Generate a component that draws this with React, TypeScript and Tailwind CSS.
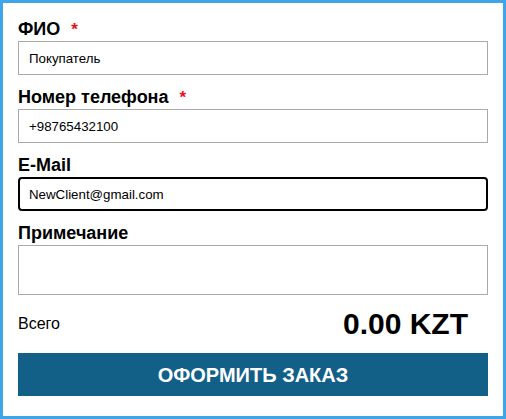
import React from 'react';

const Label: React.FC<{ text: string; required?: boolean; first?: boolean }> = ({ text, required, first }) => (
    <label className={`block h-5 leading-5 mb-[2px] text-[18px] font-bold text-black ${first ? '' : 'mt-3'}`}>
        {text}
        {required && <span className="ml-[11px] text-[#e8101a] font-bold text-[17px]">*</span>}
    </label>
);

export default function App() {
    return (
        <div
            className="w-[506px] h-[419px] bg-white border-[3px] border-[#3ea6e8] px-[15px] pt-[16px]"
            style={{ fontFamily: '"Liberation Sans", Arial, sans-serif' }}
        >
            {/* ФИО */}
            <Label text="ФИО" required first />
            <input
                readOnly
                value="Покупатель"
                className="block w-full h-[34px] border border-[#aaaaaa] px-[10px] text-[13.3px] text-black outline-none"
            />

            {/* Телефон */}
            <Label text="Номер телефона" required />
            <input
                readOnly
                value="+98765432100"
                className="block w-full h-[34px] border border-[#aaaaaa] px-[10px] text-[13.3px] text-black outline-none"
            />

            {/* E-Mail (в фокусе) */}
            <Label text="E-Mail" />
            <input
                readOnly
                value="NewClient@gmail.com"
                className="block w-full h-[34px] border-2 border-black rounded-[4px] px-[9px] text-[13.3px] text-black outline-none"
            />

            {/* Примечание */}
            <Label text="Примечание" />
            <textarea
                readOnly
                className="block w-full h-[50px] border border-[#aaaaaa] px-[10px] text-[13px] resize-none outline-none"
            />

            {/* Итого */}
            <div className="h-[58px] flex items-center justify-between">
                <span className="text-[16px] text-black">Всего</span>
                <span className="text-[30px] leading-none font-bold text-black pr-5">0.00 KZT</span>
            </div>

            <button className="w-full h-[43px] bg-[#125f87] text-white font-bold text-[20px] uppercase">
                Оформить заказ
            </button>
        </div>
    );
}
